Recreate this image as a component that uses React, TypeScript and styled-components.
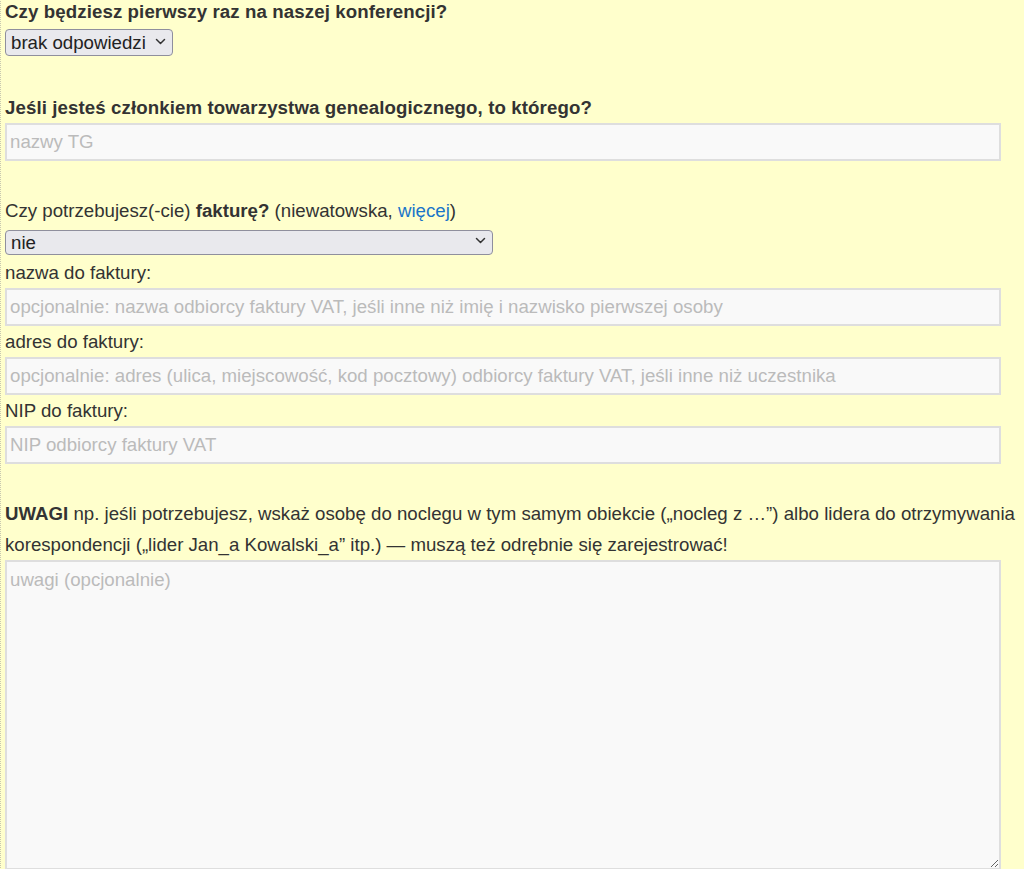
import React from "react";
import styled, {createGlobalStyle} from "styled-components";

const GlobalStyle = createGlobalStyle`
  html, body {
    margin: 0;
    padding: 0;
    background: #ffffcc;
  }
  body {
    font-family: "Liberation Sans", Arial, sans-serif;
    font-size: 18.67px;
    color: #333;
  }
`

const Page = styled.div`
  border-left: 1px dotted #c8c8b0;
  padding: 0 23px 0 4px;
  margin-top: -4px;
  min-height: 869px;
  box-sizing: border-box;
`

const Section = styled.div`
  margin-bottom: 34px;
`

const Line = styled.div`
  line-height: 31px;
  white-space: nowrap;
`

const Label = styled(Line)<{$bold?: boolean}>`
  font-weight: ${p => (p.$bold ? "bold" : "normal")};
  letter-spacing: ${p => (p.$bold ? "0.1px" : "0")};
`

const Wrap = styled.div`
  line-height: 31px;
  white-space: normal;
  margin-right: -20px;
`

const Link = styled.a`
  color: #1a75c9;
  text-decoration: none;
`

const SelectBox = styled.span<{$width: number; $height: number; $shift: number}>`
  position: relative;
  display: inline-block;
  vertical-align: top;
  margin-top: ${p => p.$shift}px;
  width: ${p => p.$width}px;
  height: ${p => p.$height}px;
`

const NativeSelect = styled.select`
  appearance: none;
  width: 100%;
  height: 100%;
  box-sizing: border-box;
  background: #e9e9ed;
  border: 1px solid #8f8f9d;
  border-radius: 4px;
  font-family: "Liberation Sans", Arial, sans-serif;
  font-size: 18.67px;
  color: #222;
  padding: 0 24px 0 5px;
  margin: 0;
`

const Chevron = styled.svg`
  position: absolute;
  right: 7px;
  top: 50%;
  margin-top: -3px;
  pointer-events: none;
`

const TextInput = styled.input`
  display: block;
  width: 100%;
  height: 38px;
  box-sizing: border-box;
  background: #f9f9f9;
  border: 2px solid #dedede;
  font-family: "Liberation Sans", Arial, sans-serif;
  font-size: 18.67px;
  color: #333;
  padding: 0 3px;
  margin: 0;
  outline: none;
  &::placeholder {
    color: #bbbbbb;
  }
`

const TextArea = styled.textarea`
  display: block;
  width: 100%;
  height: 310px;
  box-sizing: border-box;
  background: #f9f9f9;
  border: 2px solid #dedede;
  font-family: "Liberation Sans", Arial, sans-serif;
  font-size: 18.67px;
  color: #333;
  padding: 7px 3px;
  margin: 0;
  outline: none;
  &::placeholder {
    color: #bbbbbb;
  }
`

const Select = ({value, options, width, height, shift}: {value: string; options: string[]; width: number; height: number; shift: number}) => (
  <SelectBox $width={width} $height={height} $shift={shift}>
    <NativeSelect defaultValue={value}>
      {options.map(o => <option key={o} value={o}>{o}</option>)}
    </NativeSelect>
    <Chevron width="11" height="7" viewBox="0 0 11 7">
      <path d="M1.5 1.5 L5.5 5.5 L9.5 1.5" fill="none" stroke="#333" strokeWidth="1.5" strokeLinecap="round" strokeLinejoin="round"/>
    </Chevron>
  </SelectBox>
)

export default function App() {
  return (
    <>
      <GlobalStyle/>
      <Page>
        <Section>
          <Label $bold>Czy będziesz pierwszy raz na naszej konferencji?</Label>
          <Line>
            <Select value="brak odpowiedzi" options={["brak odpowiedzi", "tak", "nie"]} width={168} height={27} shift={0}/>
          </Line>
        </Section>

        <Section>
          <Label $bold>Jeśli jesteś członkiem towarzystwa genealogicznego, to którego?</Label>
          <TextInput placeholder="nazwy TG"/>
        </Section>

        <Section>
          <Line>
            Czy potrzebujesz(-cie) <b>fakturę?</b> (niewatowska, <Link href="#">więcej</Link>)
          </Line>
          <Line>
            <Select value="nie" options={["nie", "tak"]} width={488} height={25} shift={1}/>
          </Line>
          <Label>nazwa do faktury:</Label>
          <TextInput placeholder="opcjonalnie: nazwa odbiorcy faktury VAT, jeśli inne niż imię i nazwisko pierwszej osoby"/>
          <Label>adres do faktury:</Label>
          <TextInput placeholder="opcjonalnie: adres (ulica, miejscowość, kod pocztowy) odbiorcy faktury VAT, jeśli inne niż uczestnika"/>
          <Label>NIP do faktury:</Label>
          <TextInput placeholder="NIP odbiorcy faktury VAT"/>
        </Section>

        <Section>
          <Wrap>
            <b>UWAGI</b> np. jeśli potrzebujesz, wskaż osobę do noclegu w tym samym obiekcie („nocleg z …”) albo lidera do otrzymywania korespondencji („lider Jan_a Kowalski_a” itp.) — muszą też odrębnie się zarejestrować!
          </Wrap>
          <TextArea placeholder="uwagi (opcjonalnie)"/>
        </Section>
      </Page>
    </>
  );
}
